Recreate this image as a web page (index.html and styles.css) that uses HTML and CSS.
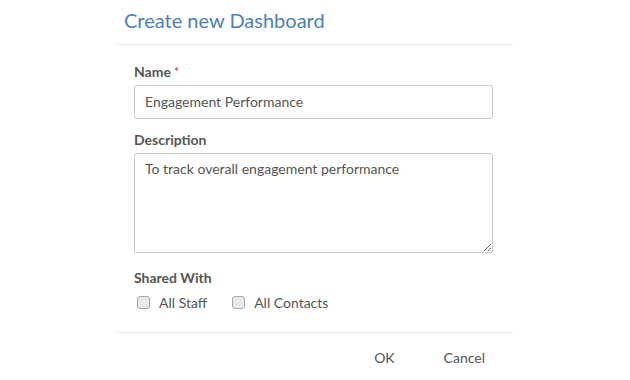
FILE: index.html
```html
<!DOCTYPE html>
<html lang="en">
<head>
    <meta charset="UTF-8">
    <title>Create new Dashboard</title>
    <link rel="stylesheet" href="styles.css">
</head>
<body>
    <div class="dialog">
        <div class="dialog_header">
            <h2 class="dialog_title">Create new Dashboard</h2>
        </div>
        <div class="dialog_body">
            <div class="field">
                <label class="field_label">Name <span class="required">*</span></label>
                <input class="text_input" type="text" value="Engagement Performance">
            </div>
            <div class="field field_tall">
                <label class="field_label">Description</label>
                <textarea class="text_area">To track overall engagement performance</textarea>
            </div>
            <div class="field">
                <label class="field_label">Shared With</label>
                <div class="check_row">
                    <label class="check_item"><input type="checkbox"> All Staff</label>
                    <label class="check_item"><input type="checkbox"> All Contacts</label>
                </div>
            </div>
        </div>
        <div class="dialog_footer">
            <button class="footer_btn">OK</button>
            <button class="footer_btn">Cancel</button>
        </div>
    </div>
</body>
</html>
```
FILE: styles.css
```css
body {
    margin: 0;
    background: #fff;
    font-family: Lato, "Liberation Sans", sans-serif;
    color: #555;
}
.dialog {
    width: 396px;
    margin-left: 117px;
}
.dialog_header {
    padding: 7px 7px 0 7px;
    height: 37px;
    border-bottom: 1px solid #e8e8e8;
}
.dialog_title {
    margin: 0;
    font-size: 20px;
    font-weight: normal;
    color: #4a80bb;
    line-height: 26px;
}
.dialog_body {
    padding: 18px 20px 21px 17px;
}
.field {
    margin-bottom: 12px;
}
.field_tall {
    margin-bottom: 16px;
}
.field:last-child {
    margin-bottom: 0;
}
.field_label {
    display: block;
    font-size: 14px;
    font-weight: bold;
    color: #555;
    line-height: 18px;
    margin-bottom: 4px;
}
.required {
    color: #e74c3c;
    font-size: 11px;
    vertical-align: top;
}
.text_input, .text_area {
    display: block;
    box-sizing: border-box;
    width: 359px;
    border: 1px solid #ccc;
    border-radius: 2px;
    font-family: Lato, "Liberation Sans", sans-serif;
    font-size: 14px;
    color: #555;
    padding: 6px 10px;
    margin: 0;
}
.text_input {
    height: 34px;
    padding: 5px 10px 7px;
}
.text_area {
    height: 100px;
    resize: vertical;
}
.check_row {
    display: flex;
    gap: 25px;
    padding-left: 3px;
    margin-top: 7px;
}
.check_item {
    font-size: 14px;
    color: #555;
    display: flex;
    align-items: center;
    gap: 9px;
}
.check_item input {
    appearance: none;
    margin: 0;
    width: 13px;
    height: 13px;
    border: 1px solid #a9a9a9;
    border-radius: 3px;
    background: #e9e9e9;
}
.dialog_footer {
    border-top: 1px solid #e8e8e8;
    display: flex;
    justify-content: flex-end;
    padding: 12px 17px 0 0;
    gap: 27px;
}
.footer_btn {
    background: none;
    border: none;
    font-family: Lato, "Liberation Sans", sans-serif;
    font-size: 14px;
    color: #555;
    padding: 4px 11px;
}
```
